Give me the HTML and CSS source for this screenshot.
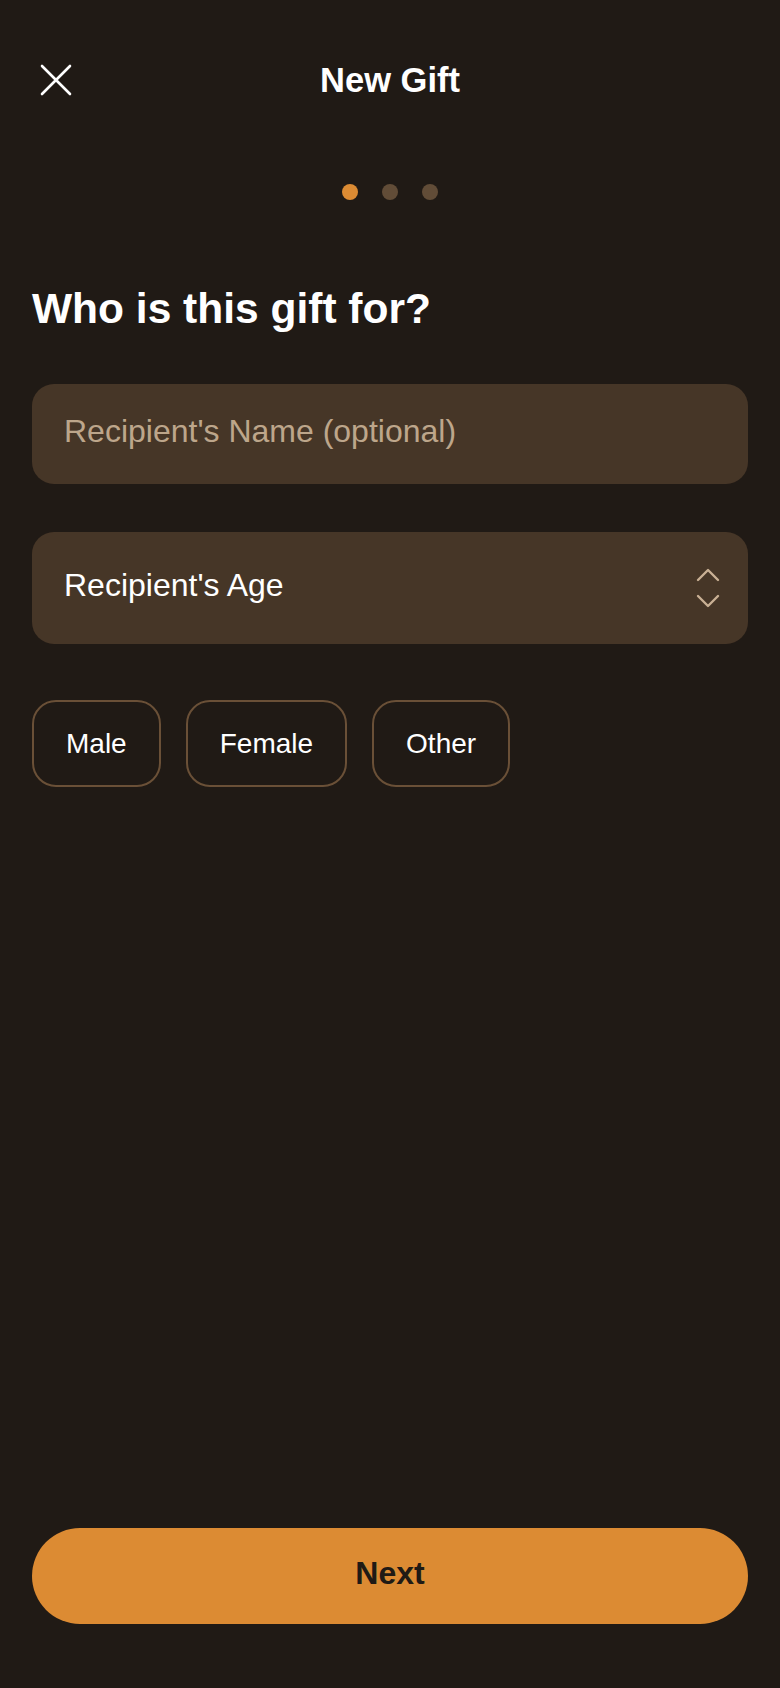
FILE: index.html
```html
<!DOCTYPE html>
<html lang="en">
<head>
  <meta charset="UTF-8">
  <title>New Gift</title>
  <meta name="viewport" content="width=device-width, initial-scale=1.0">
  <link rel="stylesheet" href="styles.css">
</head>
<body>
  <div class="screen">
    <header class="topbar">
      <button class="close-btn" aria-label="Close">
        <svg width="32" height="32" viewBox="0 0 32 32">
          <path d="M2 2 L30 30 M30 2 L2 30" stroke="#ffffff" stroke-width="2.6" stroke-linecap="round" fill="none"/>
        </svg>
      </button>
      <h1 class="title">New Gift</h1>
    </header>

    <div class="steps">
      <span class="dot active"></span>
      <span class="dot"></span>
      <span class="dot"></span>
    </div>

    <h2 class="question">Who is this gift for?</h2>

    <input type="text" class="field name-field" placeholder="Recipient's Name (optional)">

    <div class="field age-field">
      <span>Recipient's Age</span>
      <svg class="spinner" width="24" height="42" viewBox="0 0 24 42">
        <path d="M2 13 L12 3 L22 13" stroke="#c9b094" stroke-width="2.4" stroke-linecap="round" stroke-linejoin="round" fill="none"/>
        <path d="M2 29 L12 39 L22 29" stroke="#c9b094" stroke-width="2.4" stroke-linecap="round" stroke-linejoin="round" fill="none"/>
      </svg>
    </div>

    <div class="chips">
      <button class="chip">Male</button>
      <button class="chip">Female</button>
      <button class="chip">Other</button>
    </div>

    <div class="spacer"></div>

    <button class="next-btn">Next</button>
  </div>
</body>
</html>
```

FILE: styles.css
```css
* { box-sizing: border-box; }
html, body { margin: 0; padding: 0; background: #201a15; }
body { font-family: "Liberation Sans", Arial, sans-serif; color: #ffffff; }

.screen {
  min-height: 1688px; display: flex; flex-direction: column;
  padding: 0 32px 64px;
}

.topbar {
  position: relative; height: 160px; display: flex;
  align-items: center; justify-content: center;
}
.close-btn {
  position: absolute; left: 8px; top: 64px;
  width: 32px; height: 32px; padding: 0; border: none;
  background: none; cursor: pointer; display: flex;
}
.title {
  margin: 0; font-size: 34.5px; font-weight: bold; line-height: 1;
}

.steps {
  display: flex; justify-content: center; gap: 24px;
  margin-top: 24px; height: 16px;
}
.dot { width: 16px; height: 16px; border-radius: 50%; background: #614c37; }
.dot.active { background: #dc8b33; }

.question {
  margin: 85px 0 0; font-size: 42.5px; font-weight: bold; line-height: 48px;
}

.field {
  width: 100%; background: #463627; border: none; border-radius: 22px;
  font-family: inherit; font-size: 32px; color: #ffffff;
  padding: 0 32px;
}
.name-field { height: 100px; margin-top: 51px; padding-bottom: 6px; outline: none; }
.name-field::placeholder { color: #bda68b; }

.age-field {
  height: 112px; margin-top: 48px; display: flex;
  align-items: center; justify-content: space-between; padding-right: 28px;
}
.age-field span { margin-top: -6px; }

.chips { display: flex; gap: 25px; margin-top: 56px; }
.chip {
  height: 87px; padding: 0 32px; background: transparent;
  border: 2px solid #6a5037; border-radius: 24px;
  font-family: inherit; font-size: 28px; color: #ffffff; cursor: pointer;
}

.spacer { flex: 1; }

.next-btn {
  height: 96px; width: 100%; border: none; border-radius: 48px;
  background: #dc8b33; color: #201a15; cursor: pointer;
  padding-bottom: 6px;
  font-family: inherit; font-size: 32px; font-weight: bold;
}
```
